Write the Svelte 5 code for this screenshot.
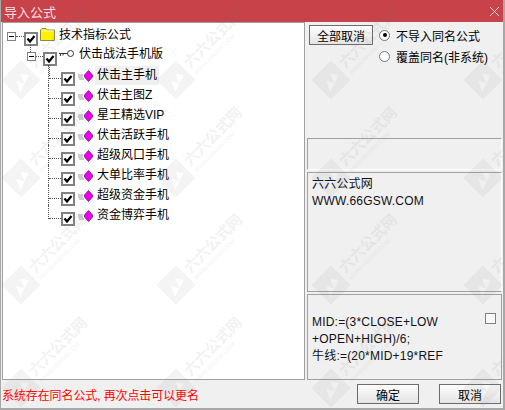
<script>
	const items = [
		'伏击主手机',
		'伏击主图Z',
		'星王精选VIP',
		'伏击活跃手机',
		'超级风口手机',
		'大单比率手机',
		'超级资金手机',
		'资金博弈手机'
	];
	const markXs = [20, 175, 330, 482];
	const markYs = [80, 178, 285, 388];
	const marks = markYs.flatMap((y) => markXs.map((x) => ({ x, y })));
</script>

{#snippet check()}
	<svg class="check" width="14" height="14" viewBox="0 0 14 14">
		<rect x="1" y="1" width="12" height="12" fill="#fff" stroke="#808080" stroke-width="2" />
		<path d="M3.5 6.5 L6 9.5 L10.5 4" fill="none" stroke="#000" stroke-width="2.2" />
	</svg>
{/snippet}

{#snippet expander()}
	<svg class="expander" width="9" height="9" viewBox="0 0 9 9">
		<rect x="0.5" y="0.5" width="8" height="8" fill="#fff" stroke="#808080" />
		<path d="M2 4.5 H7" stroke="#000" />
	</svg>
{/snippet}

<div class="window">
	<header class="title">
		<span>导入公式</span>
		<svg width="11" height="11" viewBox="0 0 11 11">
			<path d="M1 1 L10 10 M10 1 L1 10" stroke="#f3d5d6" stroke-width="1" />
		</svg>
	</header>

	<div class="main">
		<div class="tree">
			<div class="row root">
				{@render expander()}
				<span class="dash"></span>
				{@render check()}
				<svg class="folder" width="15" height="13" viewBox="0 0 15 13">
					<path d="M0.5 12.5 V2 L2 0.5 H6 L7.5 2 H14.5 V12.5 Z" fill="#fff200" stroke="#8a8a50" />
					<path d="M1.5 3 H13.5" stroke="#fffbc0" />
				</svg>
				<span class="label">技术指标公式</span>
			</div>
			<div class="row child">
				{@render expander()}
				<span class="dash"></span>
				{@render check()}
				<svg class="key" width="16" height="8" viewBox="0 0 16 8">
					<circle cx="11.5" cy="3.5" r="3" fill="#fff" stroke="#333" />
					<path d="M0 3.5 H8.5 M1.5 3.5 V6 M4 3.5 V5.5" stroke="#333" />
				</svg>
				<span class="label">伏击战法手机版</span>
			</div>
			{#each items as item, i}
				<div class="row item">
					<span class="branch" class:last={i === items.length - 1}></span>
					{@render check()}
					<svg class="gem" width="15" height="12" viewBox="0 0 15 12">
						<path d="M0 5 H5 M0 7 H5 M1 9 H6" stroke="#9a9a9a" />
						<path d="M10.5 0.5 L14.5 5 V7 L10.5 11.5 L6.5 7 V5 Z" fill="#f000f0" stroke="#70107a" stroke-width="0.8" />
					</svg>
					<span class="label" class:hover={i === 0}>{item}</span>
				</div>
			{/each}
		</div>

		<div class="side">
			<div class="options">
				<button class="btn all">全部取消</button>
				<div class="radios">
					<label class="radio"><span class="dot on"></span>不导入同名公式</label>
					<label class="radio"><span class="dot"></span>覆盖同名(非系统)</label>
				</div>
			</div>
			<div class="box empty"></div>
			<div class="box info">六六公式网<br />WWW.66GSW.COM</div>
			<div class="box code">
				<p>MID:=(3*CLOSE+LOW<br />+OPEN+HIGH)/6;<br />牛线:=(20*MID+19*REF</p>
				<span class="square"></span>
			</div>
		</div>
	</div>

	<footer class="foot">
		<span class="warn">系统存在同名公式, 再次点击可以更名</span>
		<button class="btn">确定</button>
		<button class="btn">取消</button>
	</footer>

	<div class="marks">
		{#each marks as m}
			<div class="mark" style="left: {m.x}px; top: {m.y}px">
				<svg width="28" height="28" viewBox="0 0 28 28">
					<path d="M0 0 H28 V28 H0 Z M5 22 L10 11 L14 19 L18 9 L23 16" fill="#8a8a8a" fill-rule="evenodd" />
				</svg>
				<div class="words">
					<b>六六公式网</b>
					<small>WWW.66GSW.COM</small>
				</div>
			</div>
		{/each}
	</div>
</div>

<style>
	:global(body) {
		margin: 0;
	}

	.window {
		position: relative;
		width: 505px;
		height: 410px;
		overflow: hidden;
		box-sizing: border-box;
		display: flex;
		flex-direction: column;
		background: #f0f0f0;
		border-left: 1px solid #a8a8a8;
		border-right: 2px solid #a8a8a8;
		border-bottom: 2px solid #a8a8a8;
		font-family: 'Liberation Sans', 'Noto Sans CJK SC', sans-serif;
		font-size: 12px;
		color: #000;
	}

	.title {
		flex: none;
		height: 22px;
		margin-right: -2px;
		margin-left: -1px;
		padding: 0 5px 0 4px;
		display: flex;
		align-items: center;
		justify-content: space-between;
		background: #c8424a;
		color: #f6dfe0;
		font-size: 13px;
	}

	.main {
		flex: 1;
		display: flex;
		min-height: 0;
	}

	.tree {
		box-sizing: border-box;
		width: 303px;
		margin-left: 1px;
		padding-top: 3px;
		background: #fff;
		border: 1px solid #a0a0a0;
	}

	.row {
		height: 20px;
		display: flex;
		align-items: center;
		position: relative;
		white-space: nowrap;
	}

	.root {
		padding-left: 4px;
	}

	.child {
		padding-left: 24px;
	}

	.item {
		padding-left: 45px;
	}

	.dash {
		width: 8px;
		border-bottom: 1px dotted #555;
	}

	.child .dash {
		width: 7px;
	}

	.check {
		flex: none;
		margin-top: 5px;
	}

	.root::after {
		content: '';
		position: absolute;
		left: 27px;
		top: 19px;
		height: 7px;
		border-left: 1px dotted #555;
	}

	.child::after {
		content: '';
		position: absolute;
		left: 46px;
		top: 19px;
		height: 11px;
		border-left: 1px dotted #555;
	}

	.branch {
		flex: none;
		align-self: stretch;
		width: 13px;
		margin-top: -1px;
		margin-bottom: 1px;
		box-sizing: border-box;
		border-left: 1px dotted #555;
		position: relative;
	}

	.branch::after {
		content: '';
		position: absolute;
		left: 0;
		right: 0;
		top: 13px;
		border-bottom: 1px dotted #555;
	}

	.branch.last {
		align-self: flex-start;
		height: 14px;
	}

	.folder {
		margin: -4px 0 0 2px;
	}

	.key {
		margin: -4px 0 0 2px;
	}

	.gem {
		margin-left: 3px;
	}

	.label {
		padding: 3px 2px;
		line-height: 13px;
	}

	.root .label {
		margin-left: 2px;
		margin-top: -2px;
	}

	.child .label {
		margin-left: 2px;
		margin-top: -3px;
	}

	.item .label {
		margin-left: 2px;
		margin-top: -2px;
		height: 13px;
	}

	.item .label.hover {
		background: #f0f0f0;
	}

	.side {
		flex: 1;
		min-width: 0;
		box-sizing: border-box;
		padding-left: 2px;
		padding-right: 2px;
		display: flex;
		flex-direction: column;
	}

	.options {
		height: 116px;
		flex: none;
		display: flex;
		align-items: flex-start;
		gap: 6px;
		padding: 3px 0 0 2px;
		box-sizing: border-box;
	}

	.btn {
		box-sizing: border-box;
		width: 62px;
		height: 20px;
		padding: 0;
		font: inherit;
		color: #000;
		background: linear-gradient(#fdfdfd, #e4e4e4);
		border: 1px solid #6c6c6c;
		border-radius: 0;
	}

	.all {
		width: 64px;
	}

	.radios {
		display: flex;
		flex-direction: column;
		gap: 5px;
		padding-top: 2px;
	}

	.radio {
		display: flex;
		align-items: center;
		gap: 6px;
		height: 16px;
		white-space: nowrap;
	}

	.dot {
		box-sizing: border-box;
		width: 11px;
		height: 11px;
		border-radius: 50%;
		background: #fff;
		border: 1px solid #777;
		display: flex;
		align-items: center;
		justify-content: center;
	}

	.dot.on::before {
		content: '';
		width: 4px;
		height: 4px;
		border-radius: 50%;
		background: #000;
	}

	.box {
		box-sizing: border-box;
		flex: none;
		width: 195px;
		border: 1px solid #a0a0a0;
		border-right-color: #fff;
		border-bottom-color: #fff;
		line-height: 17px;
		letter-spacing: 0.2px;
	}

	.empty {
		height: 32px;
		margin-bottom: 2px;
	}

	.info {
		height: 120px;
		padding: 3px 4px;
		margin-bottom: 2px;
		border-bottom-color: #a0a0a0;
		color: #101018;
	}

	.code {
		height: 86px;
		padding: 19px 4px 0;
		border-right-color: #a0a0a0;
		border-bottom-color: #a0a0a0;
		display: flex;
		justify-content: space-between;
		align-items: flex-start;
	}

	.code p {
		margin: 0;
		white-space: nowrap;
		color: #101018;
	}

	.square {
		flex: none;
		box-sizing: border-box;
		width: 11px;
		height: 11px;
		margin: -1px 1px 0 0;
		border: 1px solid #808080;
		background: #f8f8f8;
	}

	.foot {
		flex: none;
		height: 28px;
		display: flex;
		align-items: center;
		gap: 20px;
		padding: 0 2px 0 1px;
	}

	.warn {
		flex: 1;
		color: #f00;
		white-space: nowrap;
		letter-spacing: -0.1px;
	}

	.marks {
		position: absolute;
		inset: 0;
		pointer-events: none;
		opacity: 0.09;
	}

	.mark {
		position: absolute;
		width: 0;
		height: 0;
		transform: rotate(-45deg);
		display: flex;
		align-items: center;
		gap: 4px;
		color: #777;
		white-space: nowrap;
	}

	.mark svg {
		flex: none;
		margin-left: -14px;
	}

	.words {
		display: flex;
		flex-direction: column;
	}

	.words b {
		font-size: 15px;
		line-height: 17px;
		font-weight: 700;
	}

	.words small {
		font-size: 6px;
		line-height: 8px;
	}
</style>
